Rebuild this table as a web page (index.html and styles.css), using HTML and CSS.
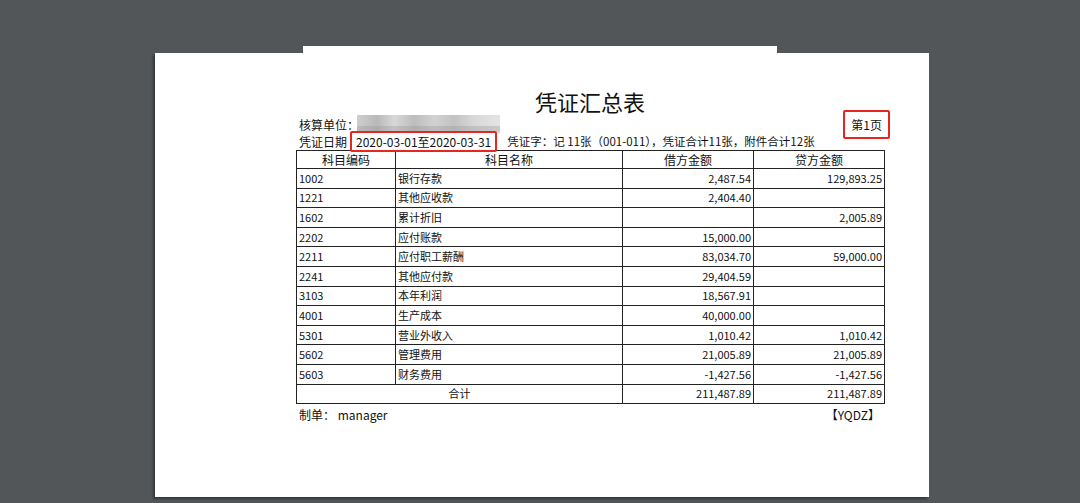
FILE: index.html
```html
<!DOCTYPE html>
<html lang="zh-CN">
<head>
<meta charset="utf-8">
<title>凭证汇总表</title>
<link rel="stylesheet" href="styles.css">
</head>
<body>
<div class="viewer">
  <div class="prev-page"></div>
  <div class="page">
    <div class="sheet">
      <h1 class="title">凭证汇总表</h1>
      <div class="info-row">
        <div class="info-left">
          <span class="label">核算单位：</span><span class="redacted" aria-hidden="true"></span>
        </div>
        <div class="page-no">第1页</div>
      </div>
      <div class="info-row2">
        <span class="label">凭证日期</span><span class="date-box">2020-03-01至2020-03-31</span><span class="voucher">凭证字：记 11张（001-011），凭证合计11张，附件合计12张</span>
      </div>
      <table class="summary">
        <colgroup>
          <col class="c-code"><col class="c-name"><col class="c-debit"><col class="c-credit">
        </colgroup>
        <thead>
          <tr><th>科目编码</th><th>科目名称</th><th>借方金额</th><th>贷方金额</th></tr>
        </thead>
        <tbody>
          <tr><td>1002</td><td>银行存款</td><td class="num">2,487.54</td><td class="num">129,893.25</td></tr>
          <tr><td>1221</td><td>其他应收款</td><td class="num">2,404.40</td><td class="num"></td></tr>
          <tr><td>1602</td><td>累计折旧</td><td class="num"></td><td class="num">2,005.89</td></tr>
          <tr><td>2202</td><td>应付账款</td><td class="num">15,000.00</td><td class="num"></td></tr>
          <tr><td>2211</td><td>应付职工薪酬</td><td class="num">83,034.70</td><td class="num">59,000.00</td></tr>
          <tr><td>2241</td><td>其他应付款</td><td class="num">29,404.59</td><td class="num"></td></tr>
          <tr><td>3103</td><td>本年利润</td><td class="num">18,567.91</td><td class="num"></td></tr>
          <tr><td>4001</td><td>生产成本</td><td class="num">40,000.00</td><td class="num"></td></tr>
          <tr><td>5301</td><td>营业外收入</td><td class="num">1,010.42</td><td class="num">1,010.42</td></tr>
          <tr><td>5602</td><td>管理费用</td><td class="num">21,005.89</td><td class="num">21,005.89</td></tr>
          <tr><td>5603</td><td>财务费用</td><td class="num">-1,427.56</td><td class="num">-1,427.56</td></tr>
          <tr><td colspan="2" class="total">合计</td><td class="num">211,487.89</td><td class="num">211,487.89</td></tr>
        </tbody>
      </table>
      <div class="footer">
        <span>制单： manager</span>
        <span>【YQDZ】</span>
      </div>
    </div>
  </div>
</div>
</body>
</html>
```

FILE: styles.css
```css
* { box-sizing: border-box; }
html, body {
  margin: 0;
  padding: 0;
  background: #525659;
  height: 503px;
  overflow: hidden;
}
body {
  font-family: "Noto Sans CJK SC", "Noto Sans", sans-serif;
  color: #111;
}
.viewer {
  padding-top: 46px;
}
.prev-page {
  width: 474px;
  height: 7px;
  margin-left: 303px;
  background: #fff;
}
.page {
  width: 774px;
  height: 444px;
  margin-left: 155px;
  background: #fff;
  box-shadow: -2px 2px 2px rgba(0, 0, 0, 0.35);
  padding-top: 33px;
}
.sheet {
  width: 588px;
  margin-left: 141px;
}
.title {
  margin: 0;
  font-size: 22px;
  line-height: 30px;
  font-weight: 400;
  text-align: center;
  color: #111;
}
.info-row {
  display: flex;
  justify-content: space-between;
  align-items: center;
  height: 17px;
  font-size: 12px;
  line-height: 17px;
  padding-left: 3px;
}
.info-left {
  display: flex;
  align-items: center;
}
.redacted {
  display: inline-block;
  width: 143px;
  height: 19px;
  margin: -2px 0 -2px -2px;
  background:
    linear-gradient(180deg, rgba(255,255,255,0) 0%, rgba(255,255,255,0) 55%, rgba(150,150,150,0.35) 60%, rgba(150,150,150,0.35) 85%, rgba(255,255,255,0) 90%),
    linear-gradient(90deg, #cfcfcf 0%, #b9b9b9 14%, #d8d8d8 26%, #bdbdbd 40%, #d2d2d2 54%, #c2c2c2 68%, #d9d9d9 82%, #e4e4e4 100%);
}
.page-no {
  border: 2px solid #e6261f;
  border-radius: 2px;
  padding: 4px 6px;
  margin: -6px -6px -6px 0;
  line-height: 17px;
}
.info-row2 {
  display: flex;
  align-items: center;
  height: 17px;
  font-size: 12px;
  line-height: 17px;
  padding-left: 3px;
  white-space: nowrap;
}
.date-box {
  border: 2px solid #e6261f;
  border-radius: 2px;
  padding: 0 4px;
  margin: -2px 0 -2px 3px;
  line-height: 17px;
  position: relative;
  z-index: 1;
  background: #fff;
}
.voucher {
  margin-left: 10px;
  font-size: 11.5px;
}
.summary {
  width: 588px;
  border-collapse: collapse;
  table-layout: fixed;
  font-size: 11px;
  color: #111;
}
.c-code { width: 99px; }
.c-name { width: 227px; }
.c-debit { width: 131px; }
.c-credit { width: 131px; }
.summary th, .summary td {
  border: 1px solid #222;
  padding: 0 2px;
  white-space: nowrap;
}
.summary th {
  font-weight: 400;
  font-size: 12px;
  height: 18px;
  line-height: 16px;
  text-align: center;
}
.summary td {
  height: 19.6px;
  line-height: 17px;
  text-align: left;
}
.summary td.num {
  text-align: right;
}
.summary td.total {
  text-align: center;
}
.footer {
  display: flex;
  justify-content: space-between;
  font-size: 12px;
  line-height: 17px;
  margin-top: 2px;
  padding: 0 4px 0 3px;
}
```
